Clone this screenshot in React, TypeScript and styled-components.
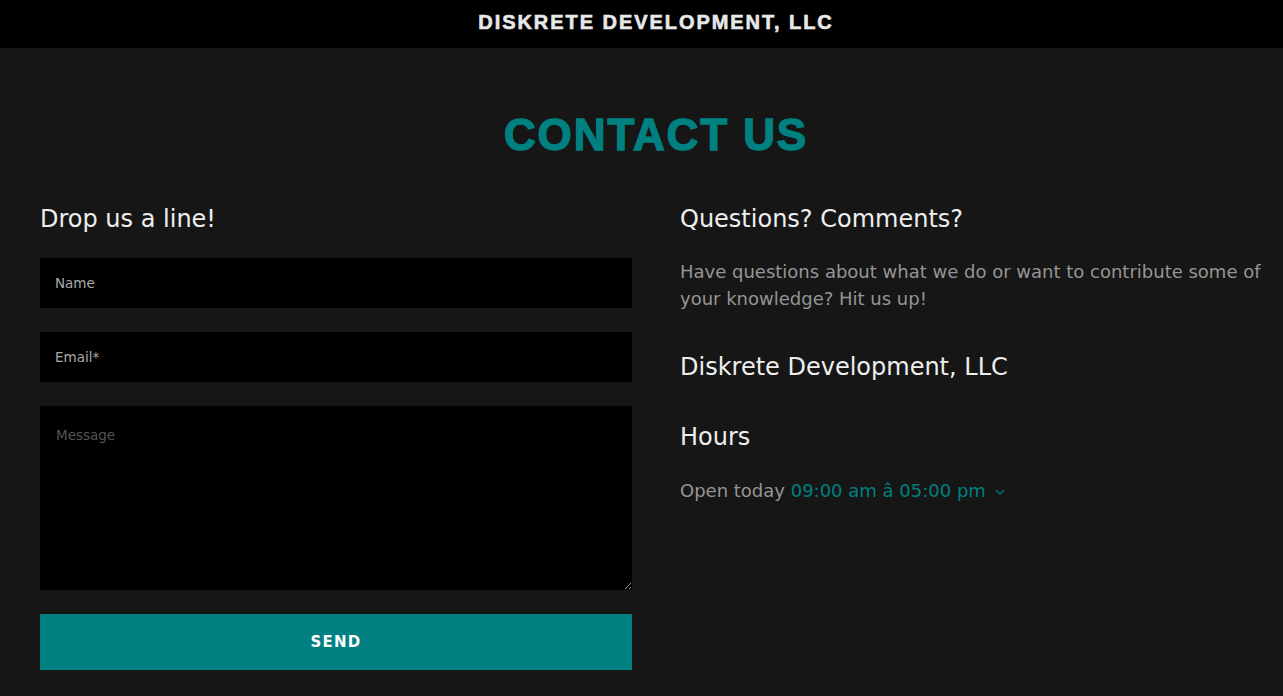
import React from "react";
import styled, { createGlobalStyle } from "styled-components";

const GlobalStyle = createGlobalStyle`
  html, body { margin: 0; padding: 0; background: #161616; overflow: hidden; }
  body { font-family: "DejaVu Sans", "Noto Sans", sans-serif; color: #eee; }
  * { box-sizing: border-box; }
`;

const Page = styled.div`
  width: 1312px;
  min-height: 696px;
  background: #161616;
`;

const TopBar = styled.header`
  height: 48px;
  background: #000;
  display: flex;
  align-items: center;
  justify-content: center;
`;

const Brand = styled.div`
  font-family: "Liberation Sans", Arial, sans-serif;
  font-weight: 700;
  font-size: 20px;
  letter-spacing: 1.95px;
  color: #e8e8e8;
  -webkit-text-stroke: 0.6px #e8e8e8;
  padding-bottom: 4px;
`;

const Main = styled.main`
  padding: 61px 40px 0;
`;

const Title = styled.h1`
  margin: 0 0 40px 0;
  text-align: center;
  font-family: "Liberation Sans", Arial, sans-serif;
  font-weight: 900;
  font-size: 44px;
  line-height: 52px;
  letter-spacing: 1.9px;
  color: #008080;
  -webkit-text-stroke: 1.4px #008080;
`;

const Columns = styled.div`
  display: grid;
  grid-template-columns: 592px 592px;
  column-gap: 48px;
`;

const Heading = styled.h2<{ $mb: number }>`
  margin: 0 0 ${(p) => p.$mb}px 0;
  font-weight: 400;
  font-size: 24px;
  line-height: 36px;
  color: #eee;
`;

const Form = styled.form`
  display: flex;
  flex-direction: column;
  gap: 24px;
`;

const Field = styled.input`
  height: 50px;
  width: 100%;
  border: none;
  background: #000;
  padding: 0 15px;
  font-family: inherit;
  font-size: 13.5px;
  color: #ddd;
  outline: none;
  &::placeholder { color: #aaa; }
`;

const Area = styled.textarea`
  height: 184px;
  width: 100%;
  border: none;
  background: #000;
  padding: 21px 16px;
  font-family: inherit;
  font-size: 13.5px;
  color: #ddd;
  outline: none;
  &::placeholder { color: #555; }
`;

const SendButton = styled.button`
  height: 56px;
  width: 100%;
  border: none;
  background: #008080;
  color: #fff;
  font-family: inherit;
  font-weight: 700;
  font-size: 15px;
  letter-spacing: 1.2px;
  cursor: pointer;
`;

const Info = styled.section`
  display: flex;
  flex-direction: column;
`;

const Para = styled.p<{ $mb: number }>`
  margin: 0 0 ${(p) => p.$mb}px 0;
  font-size: 18px;
  line-height: 27px;
  color: #959595;
`;

const Teal = styled.span`
  color: #008080;
`;

const Chevron = styled.svg`
  margin-left: 9px;
  vertical-align: middle;
`;

export default function App() {
  return (
    <>
      <GlobalStyle />
      <Page>
        <TopBar>
          <Brand>DISKRETE DEVELOPMENT, LLC</Brand>
        </TopBar>
        <Main>
          <Title>CONTACT US</Title>
          <Columns>
            <div>
              <Heading $mb={21}>Drop us a line!</Heading>
              <Form onSubmit={(e) => e.preventDefault()}>
                <Field placeholder="Name" />
                <Field placeholder="Email*" />
                <Area placeholder="Message" />
                <SendButton type="submit">SEND</SendButton>
              </Form>
            </div>
            <Info>
              <Heading $mb={21}>Questions? Comments?</Heading>
              <Para $mb={37}>
                Have questions about what we do or want to contribute some of your knowledge? Hit us up!
              </Para>
              <Heading $mb={34}>Diskrete Development, LLC</Heading>
              <Heading $mb={22}>Hours</Heading>
              <Para $mb={0}>
                Open today <Teal>09:00 am â 05:00 pm</Teal>
                <Chevron width="10" height="8" viewBox="0 0 10 8">
                  <path d="M1 2.5 L5 6 L9 2.5" fill="none" stroke="#008080" strokeWidth="1.3" />
                </Chevron>
              </Para>
            </Info>
          </Columns>
        </Main>
      </Page>
    </>
  );
}
